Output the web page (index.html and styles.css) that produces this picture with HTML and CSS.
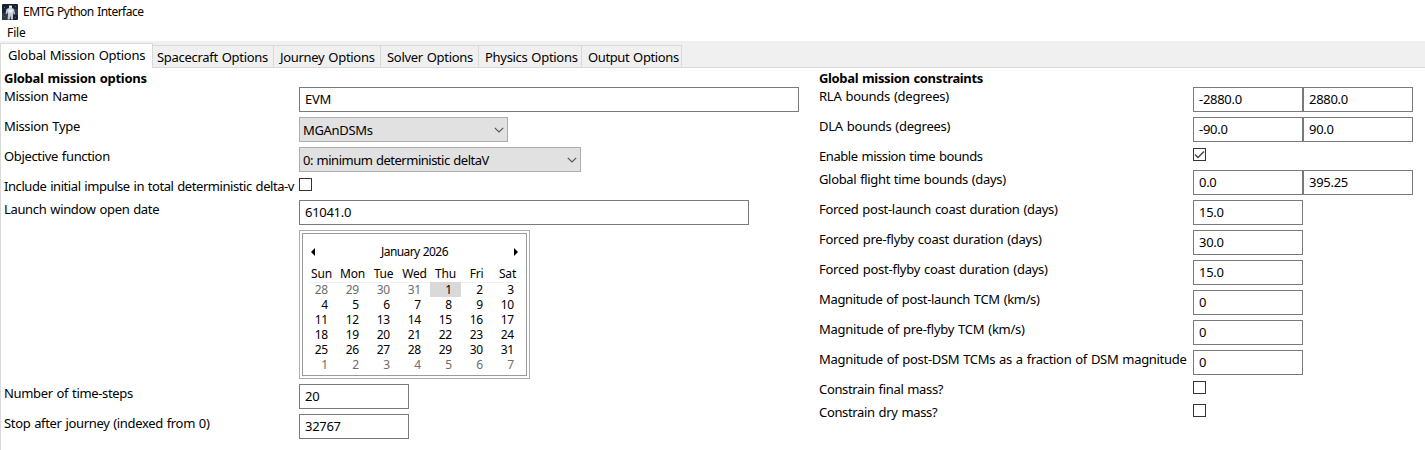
FILE: index.html
```html
<!DOCTYPE html>
<html lang="en">
<head>
<meta charset="utf-8">
<title>EMTG Python Interface</title>
<link rel="stylesheet" href="styles.css">
</head>
<body>
<header class="titlebar">
  <svg class="app-icon" width="16" height="16" viewBox="0 0 16 16">
    <rect width="16" height="16" rx="1" fill="#182230"/>
    <path d="M0 9h5v7H0zM12 5h4v6h-4z" fill="#303a46"/>
    <path d="M7 1.500h3v2.500l2 1 1 5-1.500 .5-.5-3v8H9l-.6-4-.7 4H5.500l.5-8-1 2.500-1.500-.5L4.500 5 7 4z" fill="#c3ccd5"/>
    <path d="M7 2h3v1.500H7zM6.500 5.500h4v3h-4z" fill="#edf1f3"/>
    <path d="M2 3h1v1H2zM13 2h1v1h-1zM2 12h1v1H2zM13 13h1v1h-1z" fill="#596777"/>
  </svg>
  <span class="app-title">EMTG Python Interface</span>
</header>
<nav class="menubar"><span>File</span></nav>
<div class="tabs">
  <div class="tab active t1"><span>Global Mission Options</span></div>
  <div class="tab t2"><span>Spacecraft Options</span></div>
  <div class="tab t3"><span>Journey Options</span></div>
  <div class="tab t4"><span>Solver Options</span></div>
  <div class="tab t5"><span>Physics Options</span></div>
  <div class="tab t6"><span>Output Options</span></div>
</div>
<main class="panel">
  <section class="column left">
    <h2>Global mission options</h2>
    <div class="row"><label>Mission Name</label><div class="field w500">EVM</div></div>
    <div class="row"><label>Mission Type</label><div class="select w209"><span>MGAnDSMs</span><svg class="chev" width="10" height="6" viewBox="0 0 10 6"><path d="M.8.8 5 5 9.200.8"/></svg></div></div>
    <div class="row"><label>Objective function</label><div class="select w282"><span>0: minimum deterministic deltaV</span><svg class="chev" width="10" height="6" viewBox="0 0 10 6"><path d="M.8.8 5 5 9.200.8"/></svg></div></div>
    <div class="row short"><label class="tight">Include initial impulse in total deterministic delta-v</label><div class="check"></div></div>
    <div class="row"><label>Launch window open date</label><div class="field w450">61041.0</div></div>
    <div class="row tall"><label></label>
      <div class="calendar"><div class="calendar-inner">
        <div class="cal-head">
          <svg width="4" height="8" viewBox="0 0 4 8"><path d="M4 0v8L0 4z"/></svg>
          <span>January 2026</span>
          <svg width="4" height="8" viewBox="0 0 4 8"><path d="M0 0v8l4-4z"/></svg>
        </div>
        <div class="cal-names"><span>Sun</span><span>Mon</span><span>Tue</span><span>Wed</span><span>Thu</span><span>Fri</span><span>Sat</span></div>
        <div class="cal-days">
          <i>28</i><i>29</i><i>30</i><i>31</i><b class="today">1</b><b>2</b><b>3</b>
          <b>4</b><b>5</b><b>6</b><b>7</b><b>8</b><b>9</b><b>10</b>
          <b>11</b><b>12</b><b>13</b><b>14</b><b>15</b><b>16</b><b>17</b>
          <b>18</b><b>19</b><b>20</b><b>21</b><b>22</b><b>23</b><b>24</b>
          <b>25</b><b>26</b><b>27</b><b>28</b><b>29</b><b>30</b><b>31</b>
          <i>1</i><i>2</i><i>3</i><i>4</i><i>5</i><i>6</i><i>7</i>
        </div>
      </div></div>
    </div>
    <div class="row"><label>Number of time-steps</label><div class="field">20</div></div>
    <div class="row"><label>Stop after journey (indexed from 0)</label><div class="field">32767</div></div>
  </section>
  <section class="column right">
    <h2>Global mission constraints</h2>
    <div class="row"><label class="wide">RLA bounds (degrees)</label><div class="field">-2880.0</div><div class="field">2880.0</div></div>
    <div class="row"><label class="wide">DLA bounds (degrees)</label><div class="field">-90.0</div><div class="field">90.0</div></div>
    <div class="row short"><label class="tight">Enable mission time bounds</label><div class="check"><svg width="11" height="11" viewBox="0 0 11 11"><path d="M1 5.500 4 8.500 10 2.500"/></svg></div></div>
    <div class="row"><label>Global flight time bounds (days)</label><div class="field">0.0</div><div class="field">395.25</div></div>
    <div class="row"><label class="mid">Forced post-launch coast duration (days)</label><div class="field">15.0</div></div>
    <div class="row"><label class="wide">Forced pre-flyby coast duration (days)</label><div class="field">30.0</div></div>
    <div class="row"><label class="wide">Forced post-flyby coast duration (days)</label><div class="field">15.0</div></div>
    <div class="row"><label>Magnitude of post-launch TCM (km/s)</label><div class="field">0</div></div>
    <div class="row"><label class="wide">Magnitude of pre-flyby TCM (km/s)</label><div class="field">0</div></div>
    <div class="row"><label class="mid">Magnitude of post-DSM TCMs as a fraction of DSM magnitude</label><div class="field">0</div></div>
    <div class="row short"><label>Constrain final mass?</label><div class="check"></div></div>
    <div class="row short"><label>Constrain dry mass?</label><div class="check"></div></div>
  </section>
</main>
</body>
</html>
```
FILE: styles.css
```css
* { box-sizing: border-box; }
body {
  margin: 0;
  width: 1425px;
  height: 450px;
  overflow: hidden;
  display: flex;
  flex-direction: column;
  background: #fff;
  color: #000;
  font: 13px/20px "Noto Sans", "Open Sans", sans-serif;
  letter-spacing: -0.34px;
  word-spacing: 0.8px;
  white-space: nowrap;
}
.titlebar { display: flex; align-items: center; gap: 5px; height: 23px; padding-left: 2px; font-size: 12px; letter-spacing: -0.52px; }
.app-icon { display: block; }
.menubar { height: 18px; padding-left: 7px; line-height: 20px; font-size: 12px; letter-spacing: -0.1px; }
.tabs { display: flex; align-items: flex-end; height: 27px; background: #f0f0f0; box-shadow: inset 0 -1px #d9d9d9; }
.tab { height: 23px; padding: 1px 0 0 4px; border: solid #d9d9d9; border-width: 1px 1px 1px 0; letter-spacing: -0.3px; }
.tab.active { height: 25px; padding: 1px 0 0 7px; background: #fff; border-width: 1px 1px 0 1px; letter-spacing: -0.26px; }
.t1 { width: 153px; }
.t2 { width: 121px; }
.t3 { width: 107px; padding-left: 6px; }
.t4 { width: 98px; padding-left: 6px; }
.t5 { width: 103px; padding-left: 6px; }
.t6 { width: 100px; padding-left: 6px; letter-spacing: -0.38px; }
.panel { flex: 1; display: flex; padding-left: 3px; border-left: 1px solid #d9d9d9; }
.column.left { width: 815px; }
.column.right { width: 606px; }
h2 { margin: 0; height: 19px; font-size: 13px; line-height: 20px; font-weight: 700; letter-spacing: -0.35px; }
.left h2 { letter-spacing: -0.27px; }
.row { display: flex; align-items: flex-start; height: 30px; }
.row.short { height: 23px; }
.row.tall { height: 154px; }
.left label { width: 295px; }
.right label { width: 374px; }
label { flex: none; height: 20px; line-height: 18px; }
label.mid { letter-spacing: -0.3px; }
label.wide { letter-spacing: -0.25px; }
label.tight { letter-spacing: -0.43px; }
.field { width: 110px; height: 25px; padding: 2px 5px; border: 1px solid #7a7a7a; line-height: 18px; letter-spacing: -0.28px; }
.w500 { width: 500px; }
.w450 { width: 450px; }
.select { display: flex; justify-content: space-between; align-items: center; height: 25px; padding: 0 3px 0 3px; background: #e1e1e1; border: 1px solid #adadad; }
.w209 { width: 209px; }
.w282 { width: 282px; letter-spacing: -0.5px; }
.chev { fill: none; stroke: #555; stroke-width: 1.2; }
.check { width: 13px; height: 13px; margin-top: 1px; border: 1px solid #333; }
.check svg { display: block; fill: none; stroke: #444; stroke-width: 1.4; }
.calendar { width: 231px; height: 149px; padding: 2px; border: 1px solid #adadad; }
.calendar-inner { height: 143px; padding: 8px 3px 0; border: 1px solid #9b9b9b; font-size: 12px; letter-spacing: -0.2px; }
.cal-head { display: flex; justify-content: space-between; align-items: center; height: 20px; padding: 0 5px; letter-spacing: -0.6px; }
.cal-names { display: grid; grid-template-columns: repeat(7, 31px); height: 20px; text-align: center; line-height: 24px; }
.cal-days { display: grid; grid-template-columns: repeat(7, 31px); grid-auto-rows: 15px; line-height: 16px; text-align: right; background: linear-gradient(#f0f0f0, #f0f0f0) 4px 0 / 209px 1px no-repeat; }
.cal-days b, .cal-days i { padding-right: 9px; font-weight: 400; font-style: normal; }
.cal-days i { color: #6d6d6d; }
.cal-days .today { background: #d9d9d9; }
```
